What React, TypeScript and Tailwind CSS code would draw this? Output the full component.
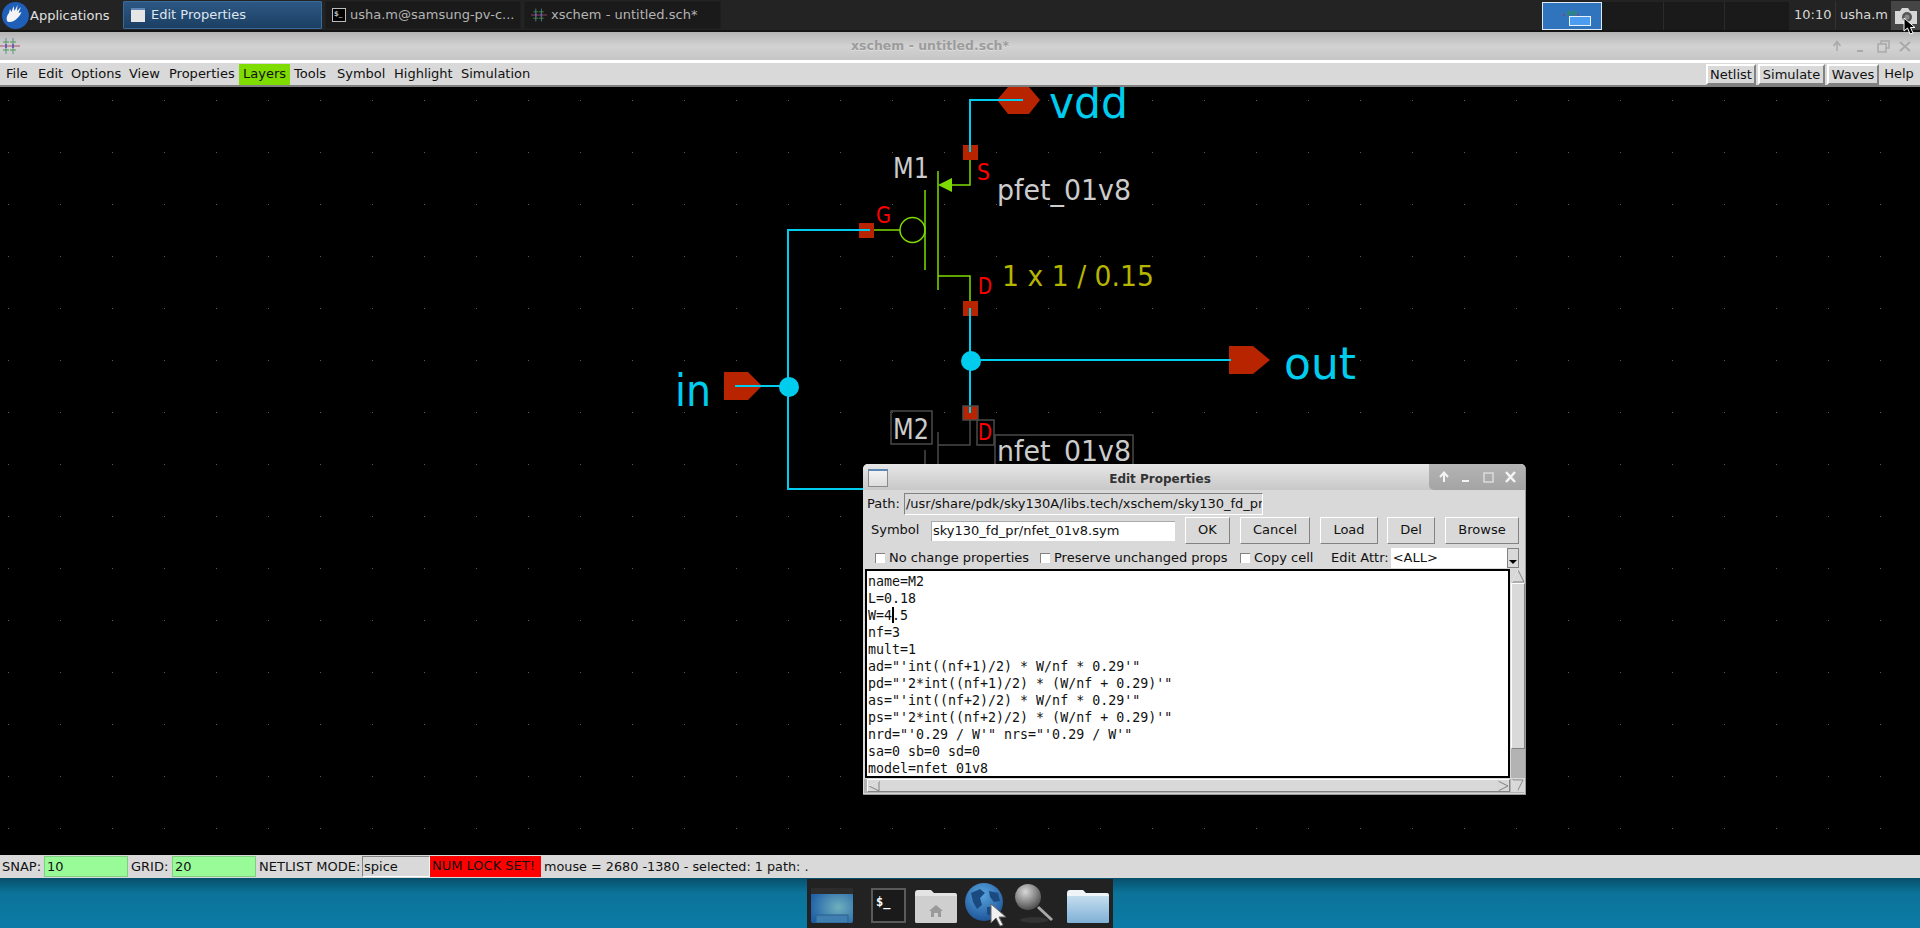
import React from "react";

const lines = [
  "name=M2",
  "L=0.18",
  "W=4.5",
  "nf=3",
  "mult=1",
  `ad="'int((nf+1)/2) * W/nf * 0.29'"`,
  `pd="'2*int((nf+1)/2) * (W/nf + 0.29)'"`,
  `as="'int((nf+2)/2) * W/nf * 0.29'"`,
  `ps="'2*int((nf+2)/2) * (W/nf + 0.29)'"`,
  `nrd="'0.29 / W'" nrs="'0.29 / W'"`,
  "sa=0 sb=0 sd=0",
  "model=nfet_01v8",
];

const XschemIcon = ({ size = 20 }: { size?: number }) => (
  <svg width={size} height={size} viewBox="0 0 20 20" fill="none">
    <path d="M0 10H20" stroke="#b04a6a" strokeWidth="1" />
    <path d="M6 2V18M13 2V18" stroke="#5a8f9a" strokeWidth="1" />
    <path d="M3 6H9M3 14H9M10 6H16M10 14H16" stroke="#4c9a4c" strokeWidth="1" />
    <path d="M6 8V12M13 8V12" stroke="#6a5fb0" strokeWidth="2" />
  </svg>
);

const TaskButton = ({
  active,
  icon,
  label,
  className,
}: {
  active?: boolean;
  icon: React.ReactNode;
  label: string;
  className: string;
}) => (
  <div
    className={`h-[28px] flex items-center gap-[4px] pl-[6px] border text-[13px] rounded-[1px] ${className} ${
      active
        ? "bg-linear-to-b from-[#2d5884] to-[#1c3f63] border-[#3a6a99] text-[#dfe6ee]"
        : "bg-[#1a1a1a] border-[#1e1e1e] text-[#b4b4b4]"
    }`}
  >
    {icon}
    <span className="whitespace-nowrap">{label}</span>
  </div>
);

const TopBar = () => (
  <div className="h-[32px] shrink-0 bg-[#232323] border-b-2 border-[#141414] flex items-start pt-px text-[#e0e0e0]">
    <div className="w-[122px] h-[29px] flex items-center">
      <svg width="29" height="29" viewBox="0 0 29 29" className="ml-px shrink-0">
        <circle cx="14.5" cy="14.5" r="13.5" fill="#1f5fb8" />
        <path
          d="M6 20c-1-3 0-6 2-8l1-4 1.500 3 2-6 1 5 3-6-.5 6 4-4-2.500 6 3-1c-1 3-3 5-5 7-3 3-8 4-9.500 2z"
          fill="#f4f4f4"
        />
      </svg>
      <span className="text-[13px] whitespace-nowrap">Applications</span>
    </div>
    <div className="flex gap-[3px] ml-[1px]">
      <TaskButton
        active
        className="w-[199px]"
        label="Edit Properties"
        icon={
          <span className="ml-[1px] mr-[2px] w-[14px] h-[14px] bg-[#e6e6e6] border-t-2 border-[#5f87b5] block" />
        }
      />
      <TaskButton
        className="w-[196px]"
        label="usha.m@samsung-pv-c..."
        icon={
          <span className="w-[14px] h-[14px] bg-black border border-[#bbb] text-[7px] leading-[10px] pl-px block font-bold">
            $_
          </span>
        }
      />
      <TaskButton className="w-[197px]" label="xschem - untitled.sch*" icon={<XschemIcon size={16} />} />
    </div>
    <div className="ml-auto flex items-start h-[29px]">
      <div className="w-[60px] h-[28px] bg-[#2f74bd] border border-[#dfe9f5] flex justify-center mt-px relative">
        <svg width="20" height="10" viewBox="0 0 20 10" className="absolute left-[20px] top-[5px]">
          <path d="M6 2V8M11 2V8M3 5H9M8 5H14" stroke="#2f8f4f" strokeWidth="1" />
          <path d="M0 7H2M14 7H16" stroke="#b03030" strokeWidth="1" />
        </svg>
        <span className="absolute left-[26px] top-[13px] w-[22px] h-[10px] bg-[#4c9df0] border border-[#e8f0fa]" />
      </div>
      <div className="w-[62px] h-[28px] mt-px bg-[#1a1a1a] border-r border-[#2b2b2b]" />
      <div className="w-[61px] h-[28px] mt-px bg-[#1a1a1a] border-r border-[#2b2b2b]" />
      <div className="w-[64px] h-[28px] mt-px bg-[#1a1a1a]" />
      <span className="w-[47px] h-[28px] text-[13px] leading-[28px] pl-[5px] text-[#d8d8d8] border-r border-[#333]">
        10:10
      </span>
      <span className="w-[55px] h-[28px] text-[13px] leading-[28px] pl-[4px] text-[#d8d8d8] whitespace-nowrap">
        usha.m
      </span>
      <div className="w-[29px] h-[29px] bg-[#454545] flex items-center justify-center">
        <svg width="24" height="18" viewBox="0 0 24 18">
          <path d="M1 4H6L8 1H14L16 4H23V17H1Z" fill="#d6d6d6" />
          <circle cx="13" cy="10" r="5" fill="#555" />
          <circle cx="13" cy="10" r="2.500" fill="#888" />
        </svg>
      </div>
    </div>
  </div>
);

const TitleBar = () => (
  <div className="h-[28px] shrink-0 relative flex items-center pl-[851px] bg-linear-to-b from-[#b4b4b4] via-[#d2d2d2] to-[#c6c6c6]">
    <div className="absolute left-0 top-[4px]">
      <XschemIcon />
    </div>
    <span className="text-[12.5px] font-bold text-[#9c9c9c] [text-shadow:0_1px_0_#dedede] whitespace-nowrap">
      xschem - untitled.sch*
    </span>
    <svg width="88" height="16" viewBox="0 0 88 16" className="absolute right-0 top-[6px]" fill="none" stroke="#a9a9a9" strokeWidth="1.500">
      <path d="M5 13V5M1.500 8L5 3.500L8.500 8" />
      <path d="M25 13H31" strokeWidth="2" />
      <path d="M46 6H54V14H46ZM49 6V3H57V10H54" />
      <path d="M68 4L78 13M78 4L68 13" strokeWidth="2" />
    </svg>
  </div>
);

const MenuItem = ({ label, active, className }: { label: string; active?: boolean; className: string }) => (
  <span className={`h-[21px] pl-[4px] leading-[20px] whitespace-nowrap ${className} ${active ? "bg-[#7fdc00]" : ""}`}>
    {label}
  </span>
);

const RaisedButton = ({ label, className }: { label: string; className: string }) => (
  <span
    className={`h-[21px] leading-[17px] text-center border-2 border-t-white border-l-white border-r-[#828282] border-b-[#828282] ${className}`}
  >
    {label}
  </span>
);

const MenuBar = () => (
  <div className="h-[27px] shrink-0 bg-[#d9d9d9] border-t-[3px] border-b-2 border-t-white border-b-[#7f7f7f] flex items-center pl-[2px] text-[13px] text-[#111]">
    <div className="flex">
      <MenuItem label="File" className="w-[32px]" />
      <MenuItem label="Edit" className="w-[33px]" />
      <MenuItem label="Options" className="w-[58px]" />
      <MenuItem label="View" className="w-[40px]" />
      <MenuItem label="Properties" className="w-[74px]" />
      <MenuItem label="Layers" active className="w-[51px]" />
      <MenuItem label="Tools" className="w-[43px]" />
      <MenuItem label="Symbol" className="w-[57px]" />
      <MenuItem label="Highlight" className="w-[67px]" />
      <MenuItem label="Simulation" className="w-[75px]" />
    </div>
    <div className="ml-auto flex items-center gap-[2px] pr-[3px]">
      <RaisedButton label="Netlist" className="w-[50px]" />
      <RaisedButton label="Simulate" className="w-[67px]" />
      <RaisedButton label="Waves" className="w-[52px]" />
      <span className="w-[36px] text-center">Help</span>
    </div>
  </div>
);

const Schematic = () => (
  <svg className="absolute inset-0 w-full h-full" viewBox="0 87 1920 768" fontFamily="'DejaVu Sans', sans-serif">
    <defs>
      <pattern id="grid" x="8" y="48" width="52" height="52" patternUnits="userSpaceOnUse">
        <rect width="1" height="1" fill="#5a5a5a" />
      </pattern>
    </defs>
    <rect x="0" y="87" width="1920" height="768" fill="url(#grid)" />

    {/* pfet */}
    <g stroke="#7fdc00" strokeWidth="1.500" fill="none">
      <path d="M970 152V185H951" />
      <path d="M938 171V290" />
      <path d="M925 190V270" />
      <circle cx="912.500" cy="230" r="12.500" />
      <path d="M874 230H900" />
      <path d="M938 276H970V305" />
    </g>
    <path d="M938 185L952 178V192Z" fill="#7fdc00" />

    {/* pins */}
    <g fill="#b82400">
      <rect x="963" y="145" width="15" height="15" />
      <rect x="859" y="223" width="15" height="15" />
      <rect x="963" y="301" width="15" height="15" />
      <rect x="963" y="406" width="15" height="14" />
      <path d="M997 100L1008 87H1029L1040 100L1029 114H1008Z" />
      <path d="M1229 346H1253L1270 360L1253 374H1229Z" />
      <path d="M724 372H748L762 386L748 400H724Z" />
    </g>

    {/* wires */}
    <g stroke="#00ccee" strokeWidth="2" fill="none">
      <path d="M1023 100H970V152" />
      <path d="M870 230H788V489H863" />
      <path d="M735 386H788" />
      <path d="M970 308V413" />
      <path d="M970 360H1231" />
    </g>
    <circle cx="789" cy="387" r="10" fill="#00ccee" />
    <circle cx="971" cy="361" r="10" fill="#00ccee" />

    {/* selected nfet */}
    <g stroke="#4a4a4a" strokeWidth="1.500" fill="none">
      <rect x="963" y="406" width="15" height="14" />
      <rect x="891" y="411" width="41" height="33" />
      <rect x="977" y="420" width="17" height="25" />
      <rect x="995" y="435" width="138" height="32" />
      <path d="M970 420V445H938M938 432V466M925 450V466" />
    </g>

    {/* labels */}
    <g fill="#00ccee" fontSize="44" lengthAdjust="spacingAndGlyphs">
      <text x="1049" y="118" textLength="79" lengthAdjust="spacingAndGlyphs">vdd</text>
      <text x="1284" y="379" textLength="72" lengthAdjust="spacingAndGlyphs">out</text>
      <text x="675" y="406" textLength="36" lengthAdjust="spacingAndGlyphs">in</text>
    </g>
    <g fill="#cccccc" fontSize="28">
      <text x="893" y="178" textLength="36" lengthAdjust="spacingAndGlyphs">M1</text>
      <text x="997" y="200" textLength="134" lengthAdjust="spacingAndGlyphs">pfet_01v8</text>
      <text x="893" y="439" textLength="36" lengthAdjust="spacingAndGlyphs">M2</text>
      <text x="997" y="461" textLength="134" lengthAdjust="spacingAndGlyphs">nfet_01v8</text>
    </g>
    <text x="1002" y="286" fill="#b5b500" fontSize="28" textLength="152" lengthAdjust="spacingAndGlyphs">1 x 1 / 0.15</text>
    <g fill="#ff0000" fontSize="23">
      <text x="977" y="180" textLength="13" lengthAdjust="spacingAndGlyphs">S</text>
      <text x="876" y="223" textLength="15" lengthAdjust="spacingAndGlyphs">G</text>
      <text x="978" y="294" textLength="14" lengthAdjust="spacingAndGlyphs">D</text>
      <text x="978" y="440" textLength="14" lengthAdjust="spacingAndGlyphs">D</text>
    </g>
  </svg>
);

const Check = ({ label, className }: { label: string; className: string }) => (
  <span className={`flex items-center gap-[4px] whitespace-nowrap ${className}`}>
    <span className="w-[10px] h-[10px] border-t border-l border-[#828282] bg-white" />
    {label}
  </span>
);

const DialogButton = ({ label, className }: { label: string; className: string }) => (
  <span
    className={`h-[27px] leading-[24px] text-center border border-t-white border-l-white border-r-[#828282] border-b-[#828282] ${className}`}
  >
    {label}
  </span>
);

const EditProperties = () => (
  <div className="absolute left-[863px] top-[377px] w-[663px] h-[331px] bg-[#d9d9d9] rounded-t-[5px] flex flex-col text-[13px] text-[#111] border-b border-r border-[#9a9a9a]">
    <div className="h-[26px] shrink-0 relative flex items-center justify-center pt-[4px] pr-[68px] rounded-t-[5px] bg-linear-to-b from-[#e6e6e6] to-[#c8c8c8]">
      <span className="absolute left-[5px] top-[5px] w-[20px] h-[18px] bg-linear-to-b from-[#f4f4f4] to-[#dcdcdc] border border-[#8a8a8a] border-t-2 border-t-[#5f87b5]" />
      <span className="text-[12px] font-bold text-[#333]">Edit Properties</span>
      <div className="absolute right-0 top-0 w-[96px] h-[26px] bg-linear-to-b from-[#b4b4b4] to-[#a4a4a4] rounded-bl-[5px] rounded-tr-[5px]">
        <svg width="96" height="26" viewBox="0 0 96 26" fill="none" stroke="#f4f4f4">
          <path d="M15 18V9M11 13L15 8.500L19 13" strokeWidth="2" />
          <path d="M33 17H40" strokeWidth="2" />
          <rect x="55" y="9" width="9" height="9" strokeWidth="1.500" stroke="#dcdcdc" />
          <path d="M77 8L86 18M86 8L77 18" strokeWidth="2.500" />
        </svg>
      </div>
    </div>
    <div className="h-[27px] shrink-0 flex items-center pl-[4px]">
      <span>Path:</span>
      <span className="ml-[4px] w-[359px] h-[22px] pl-[1px] leading-[20px] border border-t-[#828282] border-l-[#828282] border-r-white border-b-white overflow-hidden whitespace-nowrap">
        /usr/share/pdk/sky130A/libs.tech/xschem/sky130_fd_pr
      </span>
    </div>
    <div className="h-[27px] shrink-0 flex items-center pl-[8px]">
      <span className="w-[60px] -mt-px">Symbol</span>
      <span className="w-[244px] h-[20px] pl-[1px] leading-[18px] bg-white border-t border-l border-[#aaa]">
        sky130_fd_pr/nfet_01v8.sym
      </span>
      <DialogButton label="OK" className="ml-[10px] w-[45px]" />
      <DialogButton label="Cancel" className="ml-[10px] w-[70px]" />
      <DialogButton label="Load" className="ml-[10px] w-[58px]" />
      <DialogButton label="Del" className="ml-[9px] w-[48px]" />
      <DialogButton label="Browse" className="ml-[10px] w-[74px]" />
    </div>
    <div className="h-[25px] shrink-0 flex items-center pl-[12px] pt-[2px]">
      <Check label="No change properties" className="w-[165px]" />
      <Check label="Preserve unchanged props" className="w-[200px]" />
      <Check label="Copy cell" className="w-[91px]" />
      <span className="whitespace-nowrap">Edit Attr:</span>
      <span className="ml-[2px] w-[128px] h-[20px] pl-[2px] leading-[19px] bg-white relative">
        &lt;ALL&gt;
        <span className="absolute right-0 top-0 w-[12px] h-[20px] bg-[#d9d9d9] border border-[#828282] flex items-end justify-center pb-[3px]">
          <span className="w-0 h-0 border-x-[4px] border-x-transparent border-t-[4px] border-t-black" />
        </span>
      </span>
    </div>
    <div className="flex pl-[2px] h-[209px] shrink-0">
      <div className="w-[646px] border-2 border-black bg-white pl-px pt-[2px] font-['DejaVu_Sans_Mono',monospace] text-[13.3px] leading-[17px] text-[#111] whitespace-pre overflow-hidden">
        {lines.map((l) =>
          l === "W=4.5" ? (
            <div key={l}>
              W=4<span className="inline-block w-[2px] h-[16px] -mr-[2px] bg-black align-text-bottom" />.5
            </div>
          ) : (
            <div key={l}>{l}</div>
          )
        )}
      </div>
      <div className="w-[14px] ml-px flex flex-col bg-[#b3b3b3]">
        <svg width="14" height="14" viewBox="0 0 14 14" className="shrink-0 bg-[#d9d9d9]">
          <path d="M7 1L13 13H1Z" fill="#d9d9d9" stroke="#828282" />
          <path d="M7 1L1 13" stroke="#fff" />
        </svg>
        <div className="h-[166px] bg-[#d9d9d9] border border-t-white border-l-white border-r-[#828282] border-b-[#828282]" />
      </div>
    </div>
    <div className="flex pl-[3px] mt-px h-[14px] bg-[#b3b3b3] mx-px">
      <div className="w-[644px] h-[13px] bg-[#d9d9d9] border border-t-white border-l-white border-r-[#828282] border-b-[#828282] flex justify-between">
        <svg width="12" height="12" viewBox="0 0 12 12"><path d="M11 1V11L1 6Z" fill="#d9d9d9" stroke="#828282" /><path d="M11 1L1 6" stroke="#fff" /></svg>
        <svg width="12" height="12" viewBox="0 0 12 12"><path d="M1 1V11L11 6Z" fill="#d9d9d9" stroke="#828282" /><path d="M1 1V11" stroke="#fff" /></svg>
      </div>
      <svg width="13" height="13" viewBox="0 0 14 14" className="ml-px bg-[#d9d9d9]">
        <path d="M1 1H13L7 13Z" fill="#d9d9d9" stroke="#828282" />
        <path d="M1 1L7 13" stroke="#fff" />
      </svg>
    </div>
  </div>
);

const StatusBar = () => (
  <div className="h-[23px] shrink-0 bg-[#d9d9d9] flex items-center pl-[2px] text-[13px] text-[#111] whitespace-nowrap">
    <span className="w-[42px]">SNAP:</span>
    <span className="w-[84px] h-[21px] pl-[2px] leading-[20px] bg-[#98fb98] border border-[#7fcf80]">10</span>
    <span className="w-[41px] ml-[3px]">GRID:</span>
    <span className="w-[84px] h-[21px] pl-[2px] leading-[20px] bg-[#98fb98] border border-[#7fcf80]">20</span>
    <span className="ml-[3px] w-[103px]">NETLIST MODE:</span>
    <span className="w-[68px] h-[21px] pl-[1px] leading-[19px] border border-t-[#828282] border-l-[#828282] border-r-white border-b-white">
      spice
    </span>
    <span className="w-[111px] h-[21px] pl-[2px] leading-[20px] bg-[#ff0000]">NUM LOCK SET!</span>
    <span className="ml-[3px] text-[12.8px]">mouse = 2680 -1380 - selected: 1 path: .</span>
  </div>
);

const Dock = () => (
  <div className="h-[50px] shrink-0 bg-linear-to-b from-[#07506b] via-[#0c7399] via-30% to-[#0a7ba6] flex justify-center relative">
    <div className="w-[306px] h-[49px] mt-px bg-[#222222] relative flex items-start pt-[9px] pl-[4px]">
      <svg width="42" height="35" viewBox="0 0 42 35">
        <defs>
          <radialGradient id="desk" cx="0.65" cy="0.55" r="0.7">
            <stop offset="0" stopColor="#6fb0bd" />
            <stop offset="1" stopColor="#1f5fa8" />
          </radialGradient>
        </defs>
        <rect x="0" y="0" width="42" height="35" rx="2" fill="url(#desk)" />
        <rect x="0" y="0" width="42" height="6" fill="#2c2c2c" />
        <rect x="5" y="27" width="32" height="8" fill="#3f7fb0" stroke="#2a5f90" />
      </svg>
      <div className="w-[35px] h-[35px] ml-[18px] bg-[#1a1a1a] border-2 border-[#5a5a5a] text-white text-[12px] font-bold leading-[16px] pl-[3px] pt-[4px] font-['DejaVu_Sans_Mono',monospace]">
        $_
      </div>
      <svg width="42" height="35" viewBox="0 0 42 35" className="ml-[9px]">
        <path d="M0 5Q0 2 3 2H16L19 5H40Q42 5 42 7V33Q42 35 40 35H2Q0 35 0 33Z" fill="#e4e4e4" />
        <path d="M0 8H42V33Q42 35 40 35H2Q0 35 0 33Z" fill="#cfcfcf" />
        <path d="M21 17L28 23H26V29H23V25H19V29H16V23H14Z" fill="#9a9a9a" />
      </svg>
      <svg width="38" height="38" viewBox="0 0 38 38" className="ml-[8px] -mt-[5px]">
        <defs>
          <radialGradient id="globe" cx="0.45" cy="0.3" r="0.8">
            <stop offset="0" stopColor="#5aa6e0" />
            <stop offset="1" stopColor="#164a90" />
          </radialGradient>
        </defs>
        <circle cx="19" cy="19" r="19" fill="url(#globe)" />
        <path d="M6 10L15 6L20 10L15 15L17 22L12 26L8 19ZM24 8L33 10L35 18L29 19L25 14ZM22 24L29 24L26 33L22 31Z" fill="#1a4a80" />
      </svg>
      <svg width="40" height="40" viewBox="0 0 40 40" className="ml-[11px] -mt-[5px]">
        <defs>
          <radialGradient id="lens" cx="0.4" cy="0.3" r="0.8">
            <stop offset="0" stopColor="#d8d8d8" />
            <stop offset="1" stopColor="#3c3c3c" />
          </radialGradient>
        </defs>
        <ellipse cx="20" cy="37" rx="14" ry="3" fill="#333" />
        <circle cx="14" cy="14" r="13" fill="url(#lens)" />
        <path d="M24 24L38 37" stroke="#a8a8a8" strokeWidth="3" />
      </svg>
      <svg width="42" height="35" viewBox="0 0 42 35" className="ml-[13px]">
        <defs>
          <linearGradient id="fold" x1="0" y1="0" x2="0" y2="1">
            <stop offset="0" stopColor="#c4ddef" />
            <stop offset="1" stopColor="#7fb0d6" />
          </linearGradient>
        </defs>
        <path d="M0 5Q0 2 3 2H16L19 5H40Q42 5 42 7V33Q42 35 40 35H2Q0 35 0 33Z" fill="#eef4f8" />
        <path d="M0 8H42V33Q42 35 40 35H2Q0 35 0 33Z" fill="url(#fold)" />
      </svg>
      <svg width="17" height="24" viewBox="0 0 17 24" className="absolute left-[183px] top-[24px]">
        <path d="M1 1V20L6 15L10 23L13 22L9 14H16Z" fill="#f0f0f0" stroke="#666" />
      </svg>
    </div>
  </div>
);

export default function App() {
  return (
    <div className="h-screen w-full flex flex-col overflow-hidden bg-black font-['DejaVu_Sans',sans-serif] relative">
      <TopBar />
      <TitleBar />
      <MenuBar />
      <div className="flex-1 relative bg-black">
        <Schematic />
        <EditProperties />
      </div>
      <StatusBar />
      <Dock />
      <svg width="14" height="18" viewBox="0 0 14 18" className="absolute left-[1903px] top-[17px]">
        <path d="M1 1V14L4.500 11L7 17L10 16L7.500 10.500H12Z" fill="#000" stroke="#fff" />
      </svg>
    </div>
  );
}
